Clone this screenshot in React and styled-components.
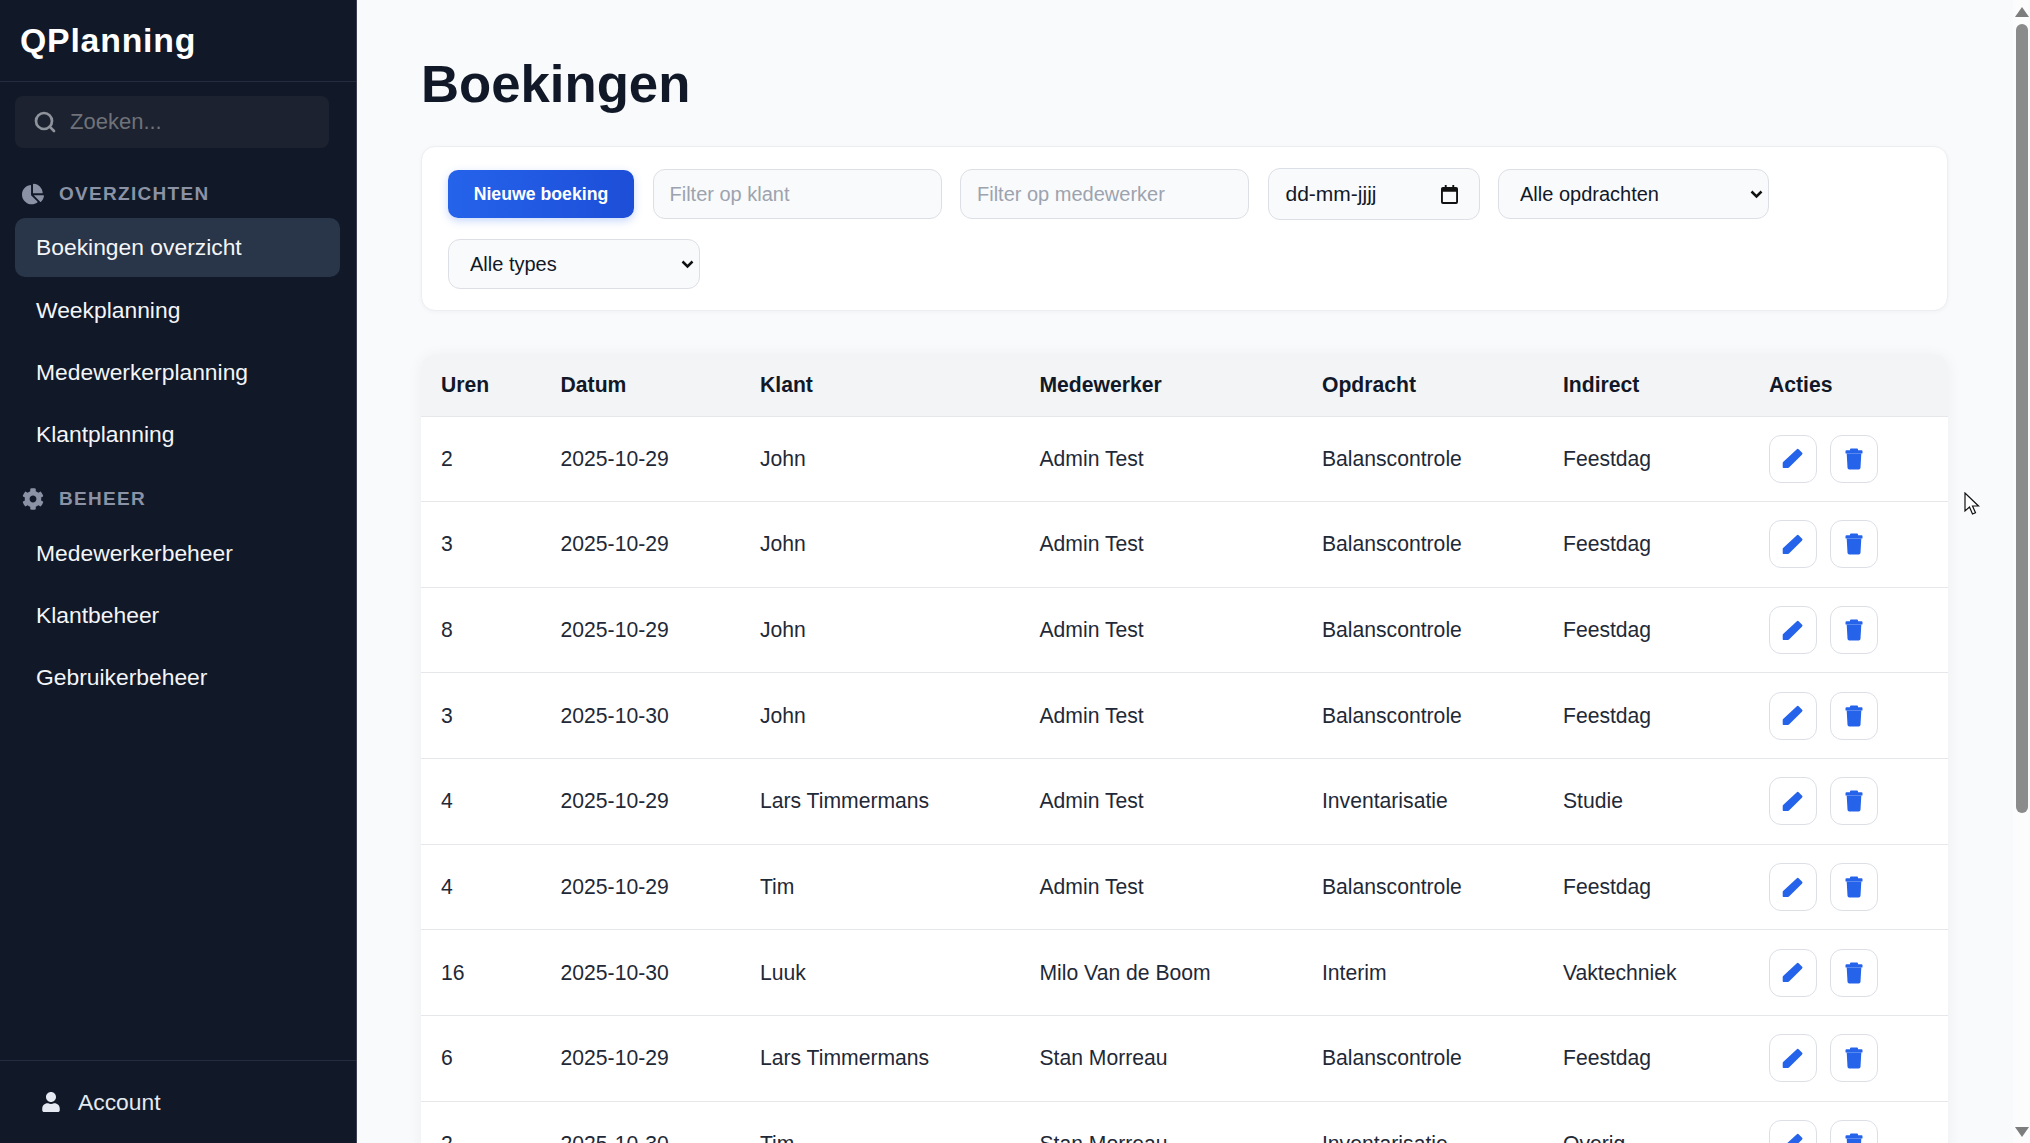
import React from 'react';
import styled, { createGlobalStyle } from 'styled-components';
import { FaChartPie, FaCog, FaUser } from 'react-icons/fa';
import { Search } from 'lucide-react';

const chevron = "url(\"data:image/svg+xml,%3Csvg xmlns='http://www.w3.org/2000/svg' width='13' height='9' viewBox='0 0 13 9'%3E%3Cpath d='M1.500 1.500l5 5 5-5' fill='none' stroke='%23111' stroke-width='2.500'/%3E%3C/svg%3E\")";

const GlobalStyle = createGlobalStyle`
    html, body {
        margin: 0;
        padding: 0;
        height: 100%;
        overflow: hidden;
        font-family: "Liberation Sans", Arial, sans-serif;
        background: #f9fafb;
    }
`;

const Page = styled.div`
    position: relative;
    display: flex;
    height: 1143px;
    overflow: hidden;
`;

const Sidebar = styled.aside`
    width: 356px;
    flex: none;
    display: flex;
    flex-direction: column;
    background: #111827;
    border-right: 1px solid #3a4152;
    color: #fff;
`;
const Logo = styled.div`
    height: 81px;
    padding-left: 20px;
    display: flex;
    align-items: center;
    border-bottom: 1px solid #252c3f;
    font-size: 33.8px;
    font-weight: 700;
    letter-spacing: 0.8px;
`;
const SearchBox = styled.div`
    display: flex;
    align-items: center;
    gap: 13px;
    width: 314px;
    height: 52px;
    box-sizing: border-box;
    margin: 14px 0 0 15px;
    padding-left: 18px;
    background: #1c2230;
    border-radius: 8px;
    color: #8f939b;
    font-size: 22px;
`;
const SearchInput = styled.input`
    flex: 1;
    min-width: 0;
    background: none;
    border: 0;
    outline: 0;
    padding: 0;
    color: #fff;
    font: inherit;
    &::placeholder {
        color: #6f7278;
    }
`;
const SectionTitle = styled.div`
    display: flex;
    align-items: center;
    gap: 15px;
    height: 30px;
    margin: ${p => p.$top}px 0 ${p => p.$bottom}px 22px;
    color: #8b92a5;
    font-size: 19px;
    font-weight: 700;
    letter-spacing: 1.3px;
    text-transform: uppercase;
`;
const NavList = styled.nav`
    display: flex;
    flex-direction: column;
    gap: 3px;
    width: 325px;
    margin-left: 15px;
`;
const NavItem = styled.a`
    display: flex;
    align-items: center;
    height: 59px;
    padding-left: 21px;
    border-radius: 10px;
    margin-bottom: ${p => (p.$active ? '1px' : '0')};
    background: ${p => (p.$active ? '#293548' : 'transparent')};
    color: #f3f5f9;
    font-size: 22.85px;
`;
const AccountBar = styled.div`
    margin-top: auto;
    height: 82px;
    display: flex;
    align-items: center;
    gap: 17px;
    padding-left: 41px;
    border-top: 1px solid #252c3f;
    color: #e5e9f2;
    font-size: 22.85px;
`;

const Main = styled.main`
    flex: 1;
    min-width: 0;
    box-sizing: border-box;
    padding: 0 65px 0 64px;
    overflow: hidden;
`;
const Title = styled.h1`
    margin: 0;
    height: 146px;
    box-sizing: border-box;
    padding-top: 20px;
    display: flex;
    align-items: center;
    color: #111827;
    font-size: 52.7px;
    font-weight: 700;
`;
const FilterCard = styled.section`
    display: flex;
    flex-wrap: wrap;
    align-items: center;
    gap: 19px 18.5px;
    height: 165px;
    box-sizing: border-box;
    padding: 21px 26px;
    background: #fff;
    border: 1px solid #eceef2;
    border-radius: 14px;
    box-shadow: 0 1px 4px rgba(17, 24, 39, 0.04);
`;
const PrimaryButton = styled.button`
    width: 186px;
    height: 48px;
    padding: 0;
    border: 0;
    border-radius: 10px;
    background: linear-gradient(90deg, #2563eb, #1d4ed8);
    box-shadow: 0 3px 8px rgba(37, 99, 235, 0.25);
    color: #fff;
    font: 700 17.7px "Liberation Sans", Arial, sans-serif;
`;
const FilterInput = styled.input`
    width: 289px;
    height: 50px;
    box-sizing: border-box;
    padding: 0 16px;
    background: #f9fafb;
    border: 1.5px solid #dcdfe5;
    border-radius: 12px;
    color: #111827;
    font: 20px "Liberation Sans", Arial, sans-serif;
    &::placeholder {
        color: #9ca3af;
    }
`;
const DateField = styled.div`
    display: flex;
    align-items: center;
    justify-content: space-between;
    width: 212px;
    height: 52px;
    box-sizing: border-box;
    padding: 0 21px 0 17px;
    background: #f9fafb;
    border: 1.5px solid #dcdfe5;
    border-radius: 12px;
    color: #111827;
    font-size: 21px;
`;
const FilterSelect = styled.select`
    width: ${p => p.$width}px;
    height: 50px;
    box-sizing: border-box;
    padding: 0 28px 0 21px;
    appearance: none;
    background: #f9fafb ${chevron} no-repeat right 5px center;
    border: 1.5px solid #dcdfe5;
    border-radius: 12px;
    color: #111827;
    font: 20px "Liberation Sans", Arial, sans-serif;
`;

const TableWrap = styled.section`
    margin-top: 43px;
    border-radius: 14px 14px 0 0;
    background: #fff;
    box-shadow: 0 2px 16px rgba(17, 24, 39, 0.05);
    overflow: hidden;
`;
const Table = styled.table`
    width: 100%;
    table-layout: fixed;
    border-collapse: collapse;
    font-size: 21.15px;
`;
const Head = styled.th`
    height: 62px;
    box-sizing: border-box;
    padding: 0 20px;
    background: #f3f4f6;
    border-bottom: 1.5px solid #e5e7eb;
    color: #111827;
    font-weight: 700;
    text-align: left;
`;
const Cell = styled.td`
    height: 85.65px;
    box-sizing: border-box;
    padding: 0 20px;
    border-bottom: 1.5px solid #e5e7eb;
    color: #1f2937;
`;
const Actions = styled.div`
    display: flex;
    gap: 13px;
`;
const IconButton = styled.button`
    width: 48px;
    height: 48px;
    display: flex;
    align-items: center;
    justify-content: center;
    padding: 0;
    background: #fff;
    border: 1.5px solid #dcdfe6;
    border-radius: 12px;
    color: #2563eb;
`;

const Scrollbar = styled.div`
    width: 17px;
    flex: none;
    display: flex;
    flex-direction: column;
    align-items: center;
    background: #fcfcfd;
`;
const ScrollArrow = styled.svg`
    width: 14px;
    height: 10px;
    margin: ${p => (p.$down ? '0 0 6px' : '7px 0 7px')};
    fill: #7d7d7d;
`;
const ScrollThumb = styled.div`
    width: 12px;
    height: 789px;
    background: #8b8b8b;
    border-radius: 6px;
`;
const ScrollSpacer = styled.div`
    flex: 1;
`;
const Cursor = styled.svg`
    position: absolute;
    left: 1964px;
    top: 492px;
    width: 16px;
    height: 24px;
`;

const columns = [
    ['Uren', 119.6],
    ['Datum', 199.4],
    ['Klant', 279.5],
    ['Medewerker', 282.5],
    ['Opdracht', 241],
    ['Indirect', 206],
    ['Acties', 199],
];

const rows = [
    ['2', '2025-10-29', 'John', 'Admin Test', 'Balanscontrole', 'Feestdag'],
    ['3', '2025-10-29', 'John', 'Admin Test', 'Balanscontrole', 'Feestdag'],
    ['8', '2025-10-29', 'John', 'Admin Test', 'Balanscontrole', 'Feestdag'],
    ['3', '2025-10-30', 'John', 'Admin Test', 'Balanscontrole', 'Feestdag'],
    ['4', '2025-10-29', 'Lars Timmermans', 'Admin Test', 'Inventarisatie', 'Studie'],
    ['4', '2025-10-29', 'Tim', 'Admin Test', 'Balanscontrole', 'Feestdag'],
    ['16', '2025-10-30', 'Luuk', 'Milo Van de Boom', 'Interim', 'Vaktechniek'],
    ['6', '2025-10-29', 'Lars Timmermans', 'Stan Morreau', 'Balanscontrole', 'Feestdag'],
    ['2', '2025-10-30', 'Tim', 'Stan Morreau', 'Inventarisatie', 'Overig'],
];

const overview = ['Boekingen overzicht', 'Weekplanning', 'Medewerkerplanning', 'Klantplanning'];
const management = ['Medewerkerbeheer', 'Klantbeheer', 'Gebruikerbeheer'];

const PenIcon = () => (
    <svg width="21" height="21" viewBox="0 0 21 21" fill="currentColor">
        <path d="M14.6 1.400a1.600 1.600 0 0 1 2.300 0l3 3a1.600 1.600 0 0 1 0 2.300L7 19.600a1.500 1.500 0 0 1-1 .4H1.500a.8.8 0 0 1-.8-.8v-4.300a1.500 1.500 0 0 1 .4-1z" />
    </svg>
);

const TrashIcon = () => (
    <svg width="18" height="22" viewBox="0 0 18 22" fill="currentColor">
        <path d="M6 0.500h6a1 1 0 0 1 1 1v.8h3.500a1 1 0 0 1 1 1v1.700a.5.500 0 0 1-.5.500H1a.5.500 0 0 1-.5-.5V3.300a1 1 0 0 1 1-1H5v-.8a1 1 0 0 1 1-1z" />
        <path d="M1.700 5.500h14.600L15.500 19.800a1.800 1.800 0 0 1-1.800 1.700H4.300a1.800 1.800 0 0 1-1.800-1.700z" />
    </svg>
);

const App = () => (
    <Page>
        <GlobalStyle />
        <Sidebar>
            <Logo>QPlanning</Logo>
            <SearchBox>
                <Search size={24} strokeWidth={2.7} />
                <SearchInput placeholder="Zoeken..." />
            </SearchBox>
            <SectionTitle $top={31} $bottom={9}>
                <FaChartPie size={22} />
                Overzichten
            </SectionTitle>
            <NavList>
                {overview.map((item, index) => (
                    <NavItem key={item} $active={index === 0}>{item}</NavItem>
                ))}
            </NavList>
            <SectionTitle $top={20} $bottom={10}>
                <FaCog size={22} />
                Beheer
            </SectionTitle>
            <NavList>
                {management.map(item => (
                    <NavItem key={item}>{item}</NavItem>
                ))}
            </NavList>
            <AccountBar>
                <FaUser size={20} />
                Account
            </AccountBar>
        </Sidebar>
        <Main>
            <Title>Boekingen</Title>
            <FilterCard>
                <PrimaryButton>Nieuwe boeking</PrimaryButton>
                <FilterInput placeholder="Filter op klant" />
                <FilterInput placeholder="Filter op medewerker" />
                <DateField>
                    dd-mm-jjjj
                    <svg width="17" height="19" viewBox="0 0 18 20">
                        <path d="M4 0h2v2h6V0h2v2h2a2 2 0 0 1 2 2v14a2 2 0 0 1-2 2H2a2 2 0 0 1-2-2V4a2 2 0 0 1 2-2h2zM2 7v11h14V7z" fill="#111" />
                    </svg>
                </DateField>
                <FilterSelect $width={271}>
                    <option>Alle opdrachten</option>
                </FilterSelect>
                <FilterSelect $width={252}>
                    <option>Alle types</option>
                </FilterSelect>
            </FilterCard>
            <TableWrap>
                <Table>
                    <colgroup>
                        {columns.map(([name, width]) => (
                            <col key={name} style={{ width }} />
                        ))}
                    </colgroup>
                    <thead>
                        <tr>
                            {columns.map(([name]) => (
                                <Head key={name}>{name}</Head>
                            ))}
                        </tr>
                    </thead>
                    <tbody>
                        {rows.map((row, index) => (
                            <tr key={index}>
                                {row.map((value, cellIndex) => (
                                    <Cell key={cellIndex}>{value}</Cell>
                                ))}
                                <Cell>
                                    <Actions>
                                        <IconButton aria-label="Bewerken"><PenIcon /></IconButton>
                                        <IconButton aria-label="Verwijderen"><TrashIcon /></IconButton>
                                    </Actions>
                                </Cell>
                            </tr>
                        ))}
                    </tbody>
                </Table>
            </TableWrap>
        </Main>
        <Scrollbar>
            <ScrollArrow viewBox="0 0 14 10"><path d="M7 0l7 10H0z" /></ScrollArrow>
            <ScrollThumb />
            <ScrollSpacer />
            <ScrollArrow $down viewBox="0 0 14 10"><path d="M0 0h14L7 10z" /></ScrollArrow>
        </Scrollbar>
        <Cursor viewBox="0 0 16 24">
            <path d="M1 1v18l4.500-4 3 7 3-1.300-3-6.700h6z" fill="#fff" stroke="#111" strokeWidth="1.200" />
        </Cursor>
    </Page>
);

export default App;
